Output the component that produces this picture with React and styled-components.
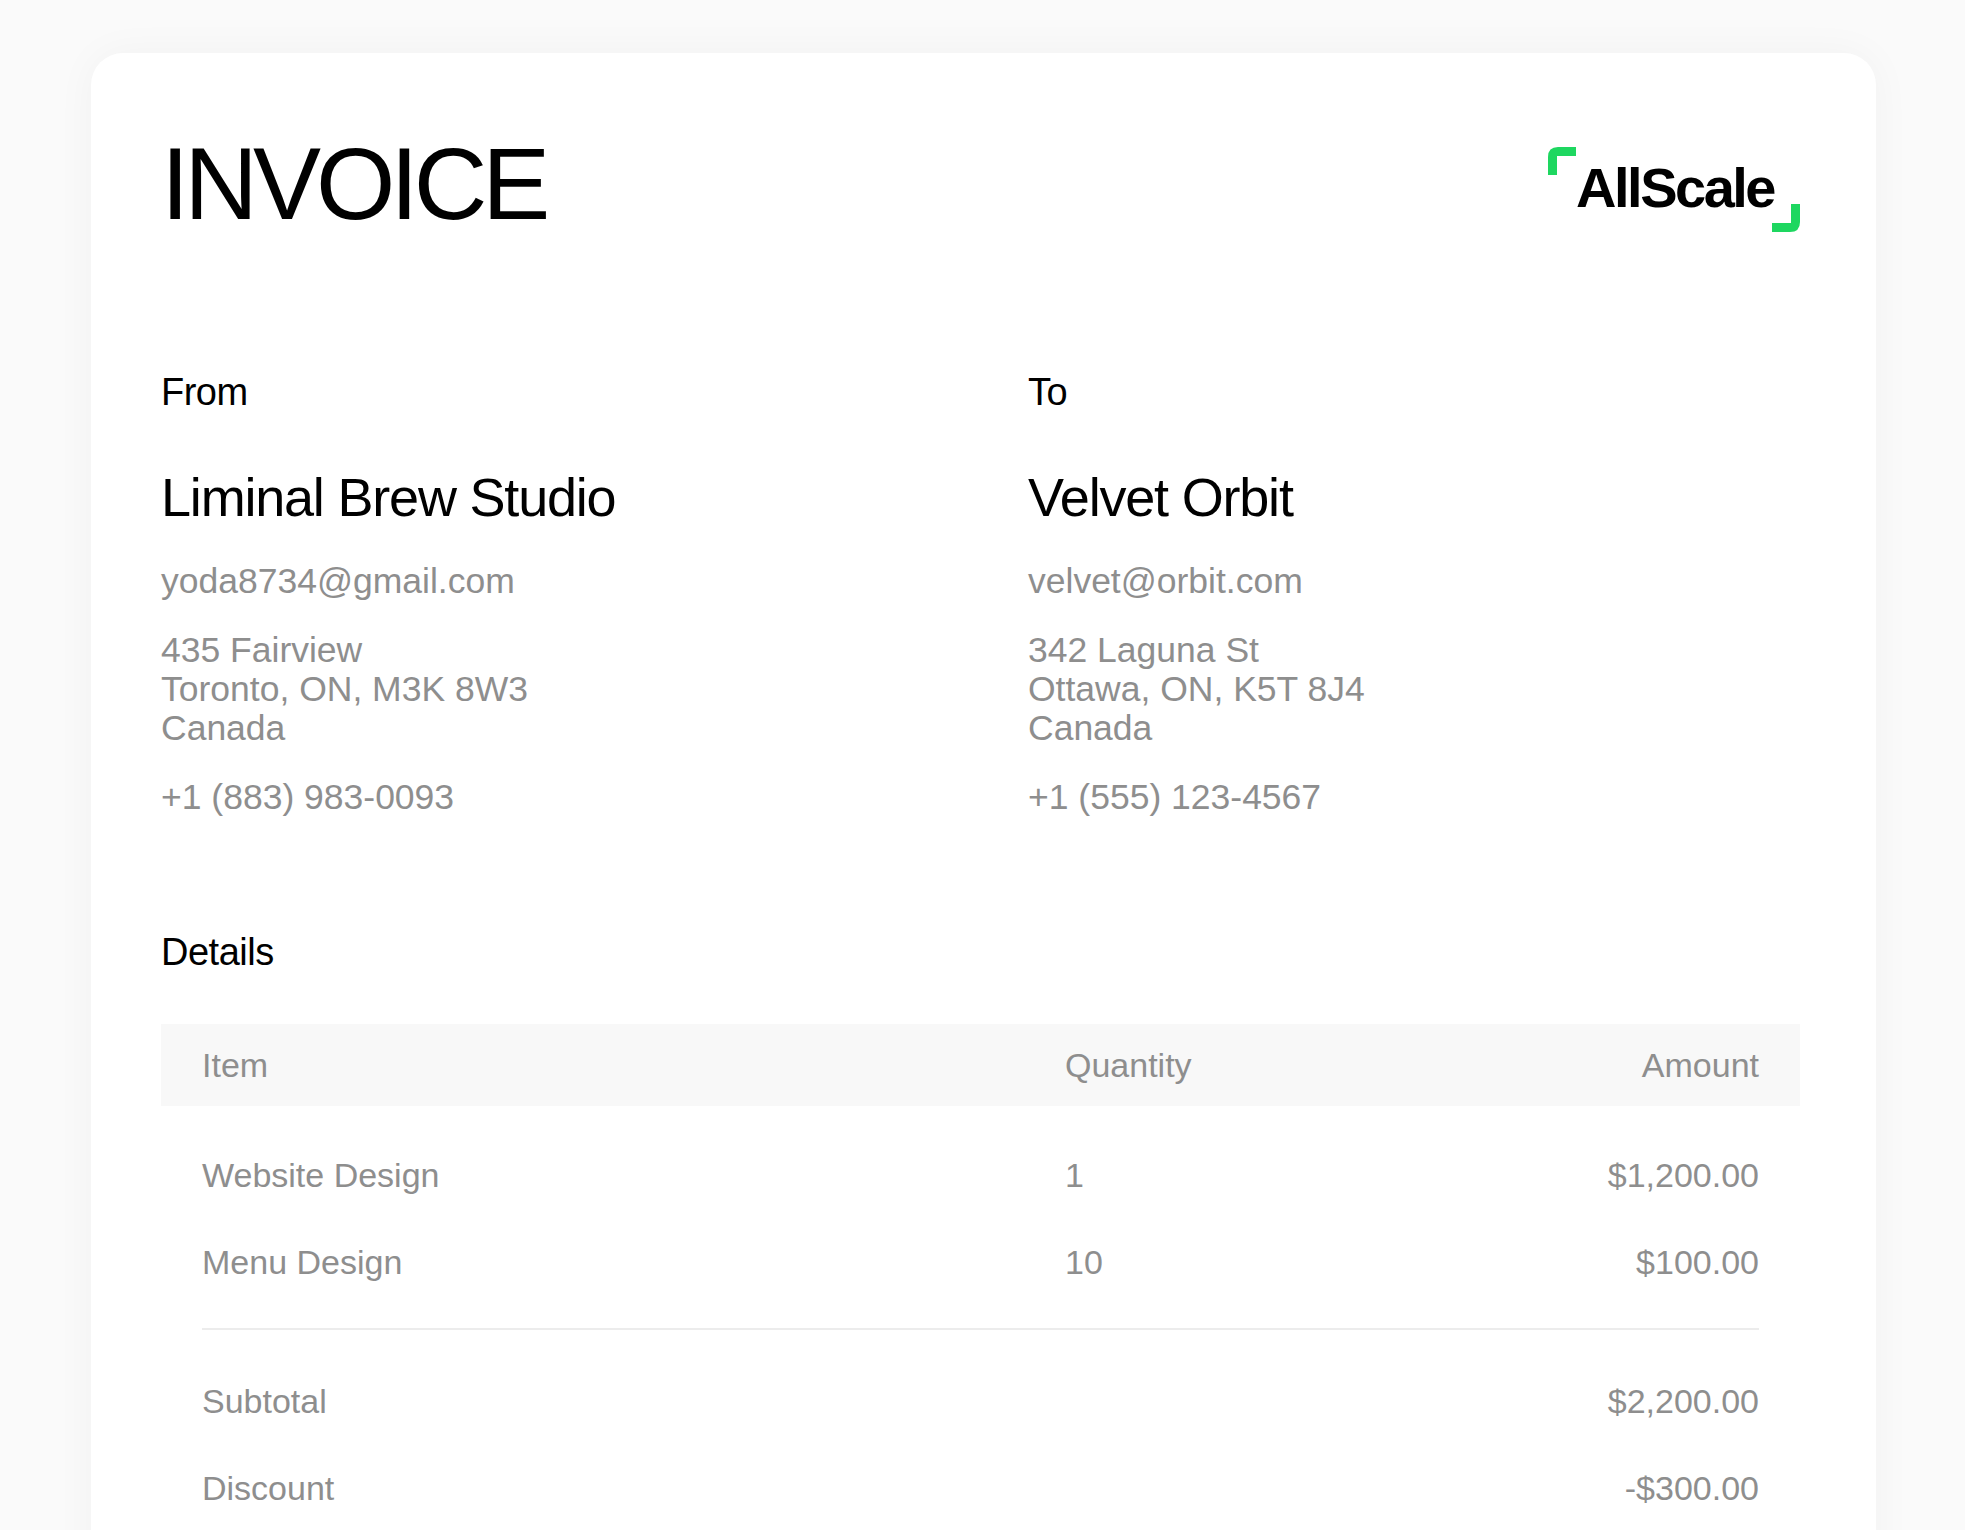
import React from "react";
import styled, { createGlobalStyle } from "styled-components";

const Global = createGlobalStyle`
  body {
    margin: 0;
    background: #fafafa;
    font-family: "Liberation Sans", Arial, sans-serif;
  }
`;

const Page = styled.div`
  padding: 53px 89px 0 91px;
  height: 1530px;
  box-sizing: border-box;
  overflow: hidden;
`;

const Card = styled.div`
  background: #fff;
  border-radius: 32px 32px 0 0;
  box-shadow: 0 0 40px rgba(0, 0, 0, 0.04);
  padding: 80px 76px 0 70px;
  height: 1600px;
`;

const Header = styled.div`
  display: flex;
  justify-content: space-between;
  align-items: flex-start;
`;

const Title = styled.h1`
  margin: 0;
  font-size: 102px;
  font-weight: 400;
  letter-spacing: -5px;
  line-height: 1;
  color: #000;
`;

const Logo = styled.div`
  position: relative;
  margin-top: 14px;
  padding: 8px 26px 8px 28px;
  font-size: 56px;
  font-weight: 700;
  letter-spacing: -2.5px;
  color: #000;
`;

const Corner = styled.svg`
  position: absolute;
  ${(p) => (p.$end ? "right: 0; bottom: -4px;" : "left: 0; top: 0;")}
`;

const Parties = styled.div`
  display: grid;
  grid-template-columns: 867px 1fr;
  margin-top: 136px;
`;

const Party = styled.div`
  display: flex;
  flex-direction: column;
`;

const Label = styled.div`
  font-size: 38px;
  color: #000;
  letter-spacing: -0.5px;
`;

const Name = styled.div`
  margin-top: 52px;
  font-size: 54px;
  letter-spacing: -1.2px;
  color: #000;
`;

const Muted = styled.div`
  color: #8e8e8e;
  font-size: 35.5px;
  line-height: 39px;
  margin-top: ${(p) => p.$gap || 30}px;
`;

const Section = styled.div`
  margin-top: 114px;
`;

const Table = styled.div`
  margin-top: 50px;
`;

const HeadRow = styled.div`
  display: grid;
  grid-template-columns: 863px 1fr auto;
  align-items: center;
  height: 82px;
  padding: 0 41px;
  background: #f8f8f8;
  color: #8e8e8e;
  font-size: 34px;
`;

const Row = styled.div`
  display: grid;
  grid-template-columns: 863px 1fr auto;
  align-items: center;
  height: 87px;
  margin: 0 41px;
  color: #8e8e8e;
  font-size: 34px;
  border-top: ${(p) => (p.$rule ? "2px solid #ececec" : "none")};
  padding-top: ${(p) => (p.$rule ? 28 : 0)}px;
`;

const Right = styled.div`
  text-align: right;
`;

const Spacer = styled.div`
  height: ${(p) => p.$h}px;
`;

const CornerTL = () => (
  <Corner width="28" height="28" viewBox="0 0 28 28">
    <path d="M0 28V10Q0 0 10 0H28V9H9V28Z" fill="#1ed760" />
  </Corner>
);

const CornerBR = () => (
  <Corner $end width="28" height="28" viewBox="0 0 28 28">
    <path d="M28 0V18Q28 28 18 28H0V19H19V0Z" fill="#1ed760" />
  </Corner>
);

const PartyBlock = ({ label, name, email, address, phone }) => (
  <Party>
    <Label>{label}</Label>
    <Name>{name}</Name>
    <Muted $gap={34}>{email}</Muted>
    <Muted $gap={30}>
      {address.map((l) => (
        <div key={l}>{l}</div>
      ))}
    </Muted>
    <Muted $gap={30}>{phone}</Muted>
  </Party>
);

export default function App() {
  return (
    <>
      <Global />
      <Page>
        <Card>
          <Header>
            <Title>INVOICE</Title>
            <Logo>
              <CornerTL />
              AllScale
              <CornerBR />
            </Logo>
          </Header>
          <Parties>
            <PartyBlock
              label="From"
              name="Liminal Brew Studio"
              email="yoda8734@gmail.com"
              address={["435 Fairview", "Toronto, ON, M3K 8W3", "Canada"]}
              phone="+1 (883) 983-0093"
            />
            <PartyBlock
              label="To"
              name="Velvet Orbit"
              email="velvet@orbit.com"
              address={["342 Laguna St", "Ottawa, ON, K5T 8J4", "Canada"]}
              phone="+1 (555) 123-4567"
            />
          </Parties>
          <Section>
            <Label>Details</Label>
            <Table>
              <HeadRow>
                <div>Item</div>
                <div>Quantity</div>
                <Right>Amount</Right>
              </HeadRow>
              <Spacer $h={26} />
              <Row>
                <div>Website Design</div>
                <div>1</div>
                <Right>$1,200.00</Right>
              </Row>
              <Row>
                <div>Menu Design</div>
                <div>10</div>
                <Right>$100.00</Right>
              </Row>
              <Spacer $h={22} />
              <Row $rule>
                <div>Subtotal</div>
                <div />
                <Right>$2,200.00</Right>
              </Row>
              <Row>
                <div>Discount</div>
                <div />
                <Right>-$300.00</Right>
              </Row>
            </Table>
          </Section>
        </Card>
      </Page>
    </>
  );
}
